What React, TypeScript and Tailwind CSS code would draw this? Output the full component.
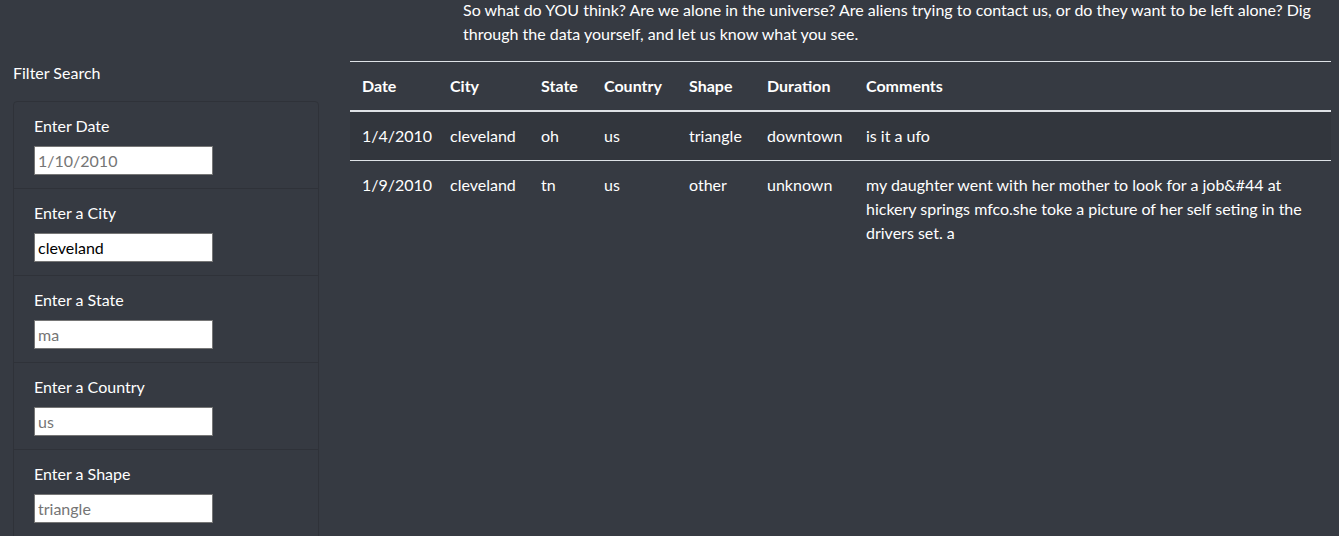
import React from "react";

type Sighting = {
  datetime: string;
  city: string;
  state: string;
  country: string;
  shape: string;
  duration: string;
  comments: string;
};

const sightings: Sighting[] = [
  {
    datetime: "1/4/2010",
    city: "cleveland",
    state: "oh",
    country: "us",
    shape: "triangle",
    duration: "downtown",
    comments: "is it a ufo",
  },
  {
    datetime: "1/9/2010",
    city: "cleveland",
    state: "tn",
    country: "us",
    shape: "other",
    duration: "unknown",
    comments:
      "my daughter went with her mother to look for a job&#44 at hickery springs mfco.she toke a picture of her self seting in the drivers set. a",
  },
];

const filters = [
  { id: "datetime", label: "Enter Date", placeholder: "1/10/2010" },
  { id: "city", label: "Enter a City", value: "cleveland" },
  { id: "state", label: "Enter a State", placeholder: "ma" },
  { id: "country", label: "Enter a Country", placeholder: "us" },
  { id: "shape", label: "Enter a Shape", placeholder: "triangle" },
];

const columns = [
  { name: "Date", w: "w-[88px]" },
  { name: "City", w: "w-[91px]" },
  { name: "State", w: "w-[63px]" },
  { name: "Country", w: "w-[85px]" },
  { name: "Shape", w: "w-[78px]" },
  { name: "Duration", w: "w-[99px]" },
  { name: "Comments", w: "" },
];

const cell = "px-3 py-3 align-top border-t border-[#dee2e6]";

const App: React.FC = () => {
  return (
    <div className="h-[536px] overflow-hidden bg-[#363a42] text-[16px] leading-6 text-white font-['Lato','Liberation_Sans',sans-serif]">
      <p className="mt-[-2px] mb-[15px] ml-[463px] mr-[4px]">
        So what do YOU think? Are we alone in the universe? Are aliens trying to
        contact us, or do they want to be left alone? Dig through the data
        yourself, and let us know what you see.
      </p>

      <div className="flex">
        {/* filters */}
        <div className="w-[350px] shrink-0 pl-[13px] pr-[31px]">
          <h5 className="mb-4">Filter Search</h5>
          <ul className="border border-[#2f3239] rounded-t">
            {filters.map((f, i) => (
              <li
                key={f.id}
                className={
                  "px-5 pt-3 pb-[13px] " + (i > 0 ? "border-t border-[#2f3239]" : "")
                }
              >
                <label htmlFor={f.id} className="block mb-2">
                  {f.label}
                </label>
                <input
                  id={f.id}
                  type="text"
                  defaultValue={f.value}
                  placeholder={f.placeholder}
                  className="block w-[179px] h-[29px] bg-white border border-[#767676] px-[3px] text-black placeholder:text-[#757575] outline-none"
                />
              </li>
            ))}
          </ul>
        </div>

        {/* table */}
        <div className="w-[981px] shrink-0">
          <table className="w-full table-fixed border-collapse">
            <thead>
              <tr>
                {columns.map((c) => (
                  <th
                    key={c.name}
                    className={
                      "px-3 py-3 text-left font-bold align-bottom border-t border-[#dee2e6] border-b-2 " +
                      c.w
                    }
                  >
                    {c.name}
                  </th>
                ))}
              </tr>
            </thead>
            <tbody>
              {sightings.map((s, i) => (
                <tr key={i} className={i % 2 === 0 ? "bg-[#32363d]" : ""}>
                  <td className={cell}>{s.datetime}</td>
                  <td className={cell}>{s.city}</td>
                  <td className={cell}>{s.state}</td>
                  <td className={cell}>{s.country}</td>
                  <td className={cell}>{s.shape}</td>
                  <td className={cell}>{s.duration}</td>
                  <td className={cell}>{s.comments}</td>
                </tr>
              ))}
            </tbody>
          </table>
        </div>
      </div>
    </div>
  );
};

export default App;
